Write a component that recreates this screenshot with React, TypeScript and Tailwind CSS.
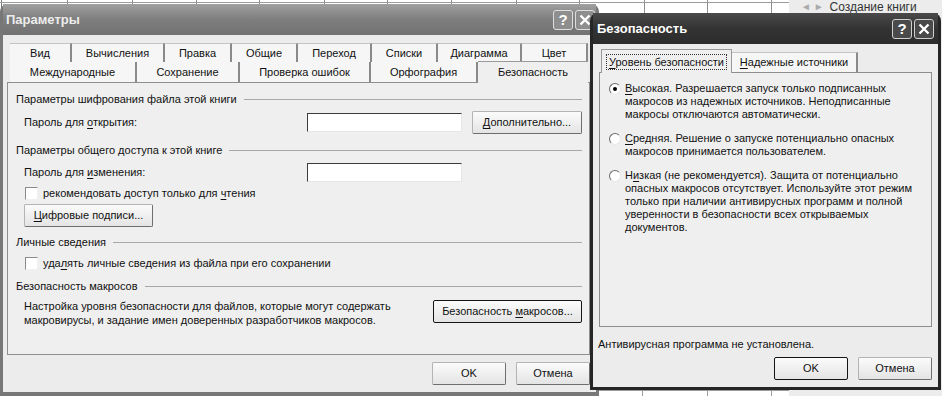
import React from "react";
import clsx from "clsx";

const FONT = "font-['Liberation_Sans',Arial,sans-serif]";

function U({ children }: { children: React.ReactNode }) {
  return <span className="underline underline-offset-[2px] decoration-1">{children}</span>;
}

function XpButton({
  children,
  className,
  isDefault,
}: {
  children: React.ReactNode;
  className?: string;
  isDefault?: boolean;
}) {
  return (
    <div
      className={clsx(
        "flex items-center justify-center whitespace-nowrap rounded-[2px] border bg-gradient-to-b from-[#fbfbfb] to-[#e4e4e4] text-[#111]",
        isDefault
          ? "border-[#141414]"
          : "border-[#b4b4b4] border-r-[#6e6e6e] border-b-[#6e6e6e]",
        className
      )}
    >
      {children}
    </div>
  );
}

function TextInput() {
  return (
    <div className="h-[19px] w-[155px] border border-t-[#3c3c3c] border-l-[#3c3c3c] border-r-[#e6e6e6] border-b-[#e6e6e6] bg-white" />
  );
}

function Checkbox() {
  return (
    <div className="h-[13px] w-[13px] shrink-0 border border-t-[#8a8a8a] border-l-[#8a8a8a] border-r-[#f0f0f0] border-b-[#f0f0f0] bg-white" />
  );
}

function Radio({ checked }: { checked?: boolean }) {
  return (
    <div className="mt-[1px] flex h-[12px] w-[12px] shrink-0 items-center justify-center rounded-full border border-t-[#6a6a6a] border-l-[#6a6a6a] border-r-[#e8e8e8] border-b-[#e8e8e8] bg-white">
      {checked && <div className="h-[4px] w-[4px] rounded-full bg-black" />}
    </div>
  );
}

function Group({ title }: { title: string }) {
  return (
    <div className="flex h-4 items-center pr-[7px]">
      <span className="whitespace-nowrap">{title}</span>
      <div className="ml-[7px] h-px flex-1 bg-[#a8a8a8]" />
    </div>
  );
}

function CaptionButtons({ dark }: { dark?: boolean }) {
  const box = clsx(
    "flex h-[20px] w-[20px] items-center justify-center rounded-[3px] border text-white",
    dark ? "border-[#d0d0d0] bg-[#4a4a4a]" : "border-[#dedede] bg-[#8e8e8e]"
  );
  return (
    <div className="flex gap-[2px]">
      <div className={box}>
        <span className="text-[15px] font-bold leading-none">?</span>
      </div>
      <div className={box}>
        <svg width="12" height="12" viewBox="0 0 12 12">
          <path d="M1.5 1.5 L10.5 10.5 M10.5 1.5 L1.5 10.5" stroke="white" strokeWidth="2.4" />
        </svg>
      </div>
    </div>
  );
}

const ROW1 = [
  { label: "Вид", w: "w-[62px]" },
  { label: "Вычисления", w: "w-[93px]" },
  { label: "Правка", w: "w-[67px]" },
  { label: "Общие", w: "w-[66px]" },
  { label: "Переход", w: "w-[74px]" },
  { label: "Списки", w: "w-[66px]" },
  { label: "Диаграмма", w: "w-[84px]" },
  { label: "Цвет", w: "w-[66px]" },
];

const ROW2 = [
  { label: "Международные", w: "w-[127px]" },
  { label: "Сохранение", w: "w-[103px]" },
  { label: "Проверка ошибок", w: "w-[131px]" },
  { label: "Орфография", w: "w-[107px]" },
];

const SHEET_COLS = [66, 65, 64, 63, 65, 63, 64, 65, 63, 65, 63, 64];
const COL_CLASS: Record<number, string> = {
  63: "w-[63px]",
  64: "w-[64px]",
  65: "w-[65px]",
  66: "w-[66px]",
};

function Sheet() {
  return (
    <div className="flex h-full">
      <div className="flex h-full w-[789px] flex-col bg-white">
        {[0, 1].map((r) => (
          <div key={r} className={clsx("flex border-b border-[#9c9c9c]", r === 0 ? "h-[3px]" : "h-[18px]")}>
            <div className="w-[2px] border-r border-[#7a7a7a]" />
            {SHEET_COLS.map((w, i) => (
              <div key={i} className={clsx(COL_CLASS[w], "shrink-0 border-r border-[#8c8c8c]")} />
            ))}
          </div>
        ))}
        <div className="flex-1" />
        <div className="flex h-[6px] border-t border-[#9c9c9c]">
          <div className="w-[643px] shrink-0 border-r border-[#9c9c9c]" />
          <div className="w-[65px] shrink-0 border-r border-[#9c9c9c]" />
          <div className="w-[64px] shrink-0 border-r border-[#9c9c9c]" />
        </div>
      </div>
      <div className="flex-1 bg-[#ececec] pl-[12px] pt-[1px]">
        {/* task pane header above the dialog */}
        <div className="flex items-center gap-[6px] whitespace-nowrap text-[12px] leading-[12px] text-[#333]">
          <span className="text-[10px] text-[#aaa]">◄ ►</span>
          <span>Создание книги</span>
        </div>
      </div>
    </div>
  );
}

function ParamsDialog() {
  return (
    <div className="absolute left-0 top-[4px] flex h-[392px] w-[599px] flex-col rounded-t-[8px] bg-[#777] px-[3px] pb-[4px]">
      <div className="flex h-[31px] shrink-0 items-center justify-between bg-gradient-to-b from-[#a0a0a0] via-[#7e7e7e] to-[#727272] pl-[3px] pr-[1px]">
        <span className="text-[13px] font-bold text-[#ececec]">Параметры</span>
        <CaptionButtons />
      </div>
      <div className="flex flex-1 flex-col bg-[#ececec]">
        <div className="ml-[7px] mt-[8px] flex flex-col">
          <div className="flex h-[19px]">
            {ROW1.map((t) => (
              <div
                key={t.label}
                className={clsx(
                  t.w,
                  "flex items-center justify-center border-r-2 border-t border-[#8a8a8a] border-t-[#c4c4c4] bg-[#f6f6f6]"
                )}
              >
                {t.label}
              </div>
            ))}
          </div>
          <div className="flex h-[20px] items-end">
            {ROW2.map((t) => (
              <div
                key={t.label}
                className={clsx(
                  t.w,
                  "flex h-[20px] items-center justify-center border-r-2 border-[#8a8a8a] bg-[#f6f6f6]"
                )}
              >
                {t.label}
              </div>
            ))}
            <div className="relative z-10 -mb-px flex h-[22px] w-[110px] items-center justify-center border-t border-[#9a9a9a] bg-[#efefef]">
              Безопасность
            </div>
          </div>
        </div>
        <div className="ml-[4px] flex h-[273px] w-[583px] flex-col border border-[#8e8e8e] bg-[#efefef] pl-[8px]">
          <div className="mt-[8px]">
            <Group title="Параметры шифрования файла этой книги" />
          </div>
          <div className="mt-[4px] flex h-[23px] items-center pl-[8px]">
            <span className="w-[283px]">
              Пароль для <U>о</U>ткрытия:
            </span>
            <TextInput />
            <XpButton className="ml-[10px] h-[23px] w-[110px]">
              <span>
                <U>Д</U>ополнительно...
              </span>
            </XpButton>
          </div>
          <div className="mt-[8px]">
            <Group title="Параметры общего доступа к этой книге" />
          </div>
          <div className="mt-[4px] flex h-[20px] items-center pl-[8px]">
            <span className="w-[283px]">
              Пароль для <U>и</U>зменения:
            </span>
            <TextInput />
          </div>
          <div className="mt-[4px] flex h-[14px] items-center gap-[5px] pl-[9px]">
            <Checkbox />
            <span>
              рекомендовать доступ только для <U>ч</U>тения
            </span>
          </div>
          <div className="mt-[4px] pl-[8px]">
            <XpButton className="h-[23px] w-[129px]">
              <span>
                <U>Ц</U>ифровые подписи...
              </span>
            </XpButton>
          </div>
          <div className="mt-[7px]">
            <Group title="Личные сведения" />
          </div>
          <div className="mt-[6px] flex h-[14px] items-center gap-[5px] pl-[9px]">
            <Checkbox />
            <span>
              уда<U>л</U>ять личные сведения из файла при его сохранении
            </span>
          </div>
          <div className="mt-[8px]">
            <Group title="Безопасность макросов" />
          </div>
          <div className="mt-[6px] flex items-start justify-between pl-[8px] pr-[7px]">
            <div className="-mt-px whitespace-nowrap leading-[14px]">
              <div>Настройка уровня безопасности для файлов, которые могут содержать</div>
              <div>макровирусы, и задание имен доверенных разработчиков макросов.</div>
            </div>
            <XpButton isDefault className="h-[23px] w-[149px]">
              <span>
                Безопасность <U>м</U>акросов...
              </span>
            </XpButton>
          </div>
        </div>
        <div className="mt-[7px] flex justify-end gap-[10px] pr-[6px]">
          <XpButton className="h-[23px] w-[74px]">OK</XpButton>
          <XpButton className="h-[23px] w-[74px]">Отмена</XpButton>
        </div>
      </div>
    </div>
  );
}

const LEVELS = [
  {
    checked: true,
    lines: [
      <>
        <U>В</U>ысокая. Разрешается запуск только подписанных
      </>,
      "макросов из надежных источников. Неподписанные",
      "макросы отключаются автоматически.",
    ],
  },
  {
    checked: false,
    lines: [
      <>
        <U>С</U>редняя. Решение о запуске потенциально опасных
      </>,
      "макросов принимается пользователем.",
    ],
  },
  {
    checked: false,
    lines: [
      <>
        Н<U>и</U>зкая (не рекомендуется). Защита от потенциально
      </>,
      "опасных макросов отсутствует. Используйте этот режим",
      "только при наличии антивирусных программ и полной",
      "уверенности в безопасности всех открываемых",
      "документов.",
    ],
  },
];

function SecurityDialog() {
  return (
    <div className="absolute left-[590px] top-[13px] flex h-[377px] w-[351px] flex-col rounded-t-[8px] bg-[#262626] px-[3px] pb-[3px]">
      <div className="flex h-[31px] shrink-0 items-center justify-between bg-gradient-to-b from-[#4a4a4a] via-[#333] to-[#2c2c2c] pl-[4px] pr-[4px]">
        <span className="text-[13px] font-bold text-white">Безопасность</span>
        <CaptionButtons dark />
      </div>
      <div className="flex flex-1 flex-col bg-[#ececec]">
        <div className="ml-[8px] mt-[5px] flex h-[23px] items-end">
          <div className="relative z-10 -mb-px flex h-[24px] w-[131px] items-center justify-center whitespace-nowrap border-l border-r border-t border-[#9a9a9a] bg-[#efefef]">
            <span className="border border-dotted border-[#333] px-[2px] leading-[14px]">
              <U>У</U>ровень безопасности
            </span>
          </div>
          <div className="flex h-[20px] w-[126px] items-center justify-center whitespace-nowrap border-r-2 border-t border-[#8a8a8a] border-t-[#c4c4c4] bg-[#f6f6f6]">
            <span>
              <U>Н</U>адежные источники
            </span>
          </div>
        </div>
        <div className="ml-[6px] flex h-[255px] w-[333px] flex-col gap-[11px] border border-[#8e8e8e] bg-[#efefef] pl-[9px] pt-[9px]">
          {LEVELS.map((lv, i) => (
            <div key={i} className="flex gap-[4px]">
              <Radio checked={lv.checked} />
              <div className="whitespace-nowrap leading-[13px]">
                {lv.lines.map((l, j) => (
                  <div key={j}>{l}</div>
                ))}
              </div>
            </div>
          ))}
        </div>
        <div className="ml-[5px] mt-[10px] h-[14px] leading-[14px]">Антивирусная программа не установлена.</div>
        <div className="mt-[6px] flex justify-end gap-[10px] pr-[6px]">
          <XpButton isDefault className="h-[23px] w-[74px]">
            OK
          </XpButton>
          <XpButton className="h-[23px] w-[74px]">Отмена</XpButton>
        </div>
      </div>
    </div>
  );
}

export default function App() {
  return (
    <div className={clsx("relative h-[396px] w-[942px] overflow-hidden bg-white text-[11px] text-[#111]", FONT)}>
      <Sheet />
      <ParamsDialog />
      <SecurityDialog />
    </div>
  );
}
